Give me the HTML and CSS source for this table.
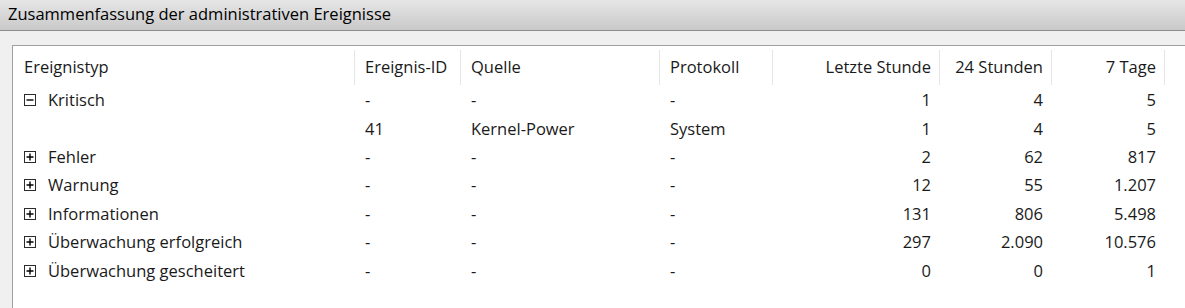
FILE: index.html
```html
<!DOCTYPE html>
<html lang="de">
<head>
    <meta charset="UTF-8">
    <meta name="viewport" content="width=device-width, initial-scale=1.0">
    <title>Zusammenfassung der administrativen Ereignisse</title>
    <link rel="stylesheet" href="styles.css">
</head>
<body>
    <div class="section-title">Zusammenfassung der administrativen Ereignisse</div>
    <div class="section-body">
        <div class="panel">
            <table class="summary">
                <colgroup>
                    <col class="c-type">
                    <col class="c-id">
                    <col class="c-source">
                    <col class="c-log">
                    <col class="c-hour">
                    <col class="c-day">
                    <col class="c-week">
                    <col>
                </colgroup>
                <thead>
                    <tr>
                        <th>Ereignistyp</th>
                        <th>Ereignis-ID</th>
                        <th>Quelle</th>
                        <th>Protokoll</th>
                        <th class="num">Letzte Stunde</th>
                        <th class="num">24 Stunden</th>
                        <th class="num">7 Tage</th>
                        <th class="filler"></th>
                    </tr>
                </thead>
                <tbody>
                    <tr>
                        <td><span class="node"><svg class="toggle" width="12" height="12" viewBox="0 0 12 12"><rect x="0.5" y="0.5" width="11" height="11" fill="#fff" stroke="#2b2b2b"/><path d="M2.5 6h7" stroke="#000" stroke-width="1.4"/></svg>Kritisch</span></td>
                        <td>-</td><td>-</td><td>-</td>
                        <td class="num">1</td><td class="num">4</td><td class="num">5</td><td></td>
                    </tr>
                    <tr>
                        <td></td>
                        <td>41</td><td>Kernel-Power</td><td>System</td>
                        <td class="num">1</td><td class="num">4</td><td class="num">5</td><td></td>
                    </tr>
                    <tr>
                        <td><span class="node"><svg class="toggle" width="12" height="12" viewBox="0 0 12 12"><rect x="0.5" y="0.5" width="11" height="11" fill="#fff" stroke="#2b2b2b"/><path d="M2.5 6h7M6 2.5v7" stroke="#000" stroke-width="1.4"/></svg>Fehler</span></td>
                        <td>-</td><td>-</td><td>-</td>
                        <td class="num">2</td><td class="num">62</td><td class="num">817</td><td></td>
                    </tr>
                    <tr>
                        <td><span class="node"><svg class="toggle" width="12" height="12" viewBox="0 0 12 12"><rect x="0.5" y="0.5" width="11" height="11" fill="#fff" stroke="#2b2b2b"/><path d="M2.5 6h7M6 2.5v7" stroke="#000" stroke-width="1.4"/></svg>Warnung</span></td>
                        <td>-</td><td>-</td><td>-</td>
                        <td class="num">12</td><td class="num">55</td><td class="num">1.207</td><td></td>
                    </tr>
                    <tr>
                        <td><span class="node"><svg class="toggle" width="12" height="12" viewBox="0 0 12 12"><rect x="0.5" y="0.5" width="11" height="11" fill="#fff" stroke="#2b2b2b"/><path d="M2.5 6h7M6 2.5v7" stroke="#000" stroke-width="1.4"/></svg>Informationen</span></td>
                        <td>-</td><td>-</td><td>-</td>
                        <td class="num">131</td><td class="num">806</td><td class="num">5.498</td><td></td>
                    </tr>
                    <tr>
                        <td><span class="node"><svg class="toggle" width="12" height="12" viewBox="0 0 12 12"><rect x="0.5" y="0.5" width="11" height="11" fill="#fff" stroke="#2b2b2b"/><path d="M2.5 6h7M6 2.5v7" stroke="#000" stroke-width="1.4"/></svg>Überwachung erfolgreich</span></td>
                        <td>-</td><td>-</td><td>-</td>
                        <td class="num">297</td><td class="num">2.090</td><td class="num">10.576</td><td></td>
                    </tr>
                    <tr>
                        <td><span class="node"><svg class="toggle" width="12" height="12" viewBox="0 0 12 12"><rect x="0.5" y="0.5" width="11" height="11" fill="#fff" stroke="#2b2b2b"/><path d="M2.5 6h7M6 2.5v7" stroke="#000" stroke-width="1.4"/></svg>Überwachung gescheitert</span></td>
                        <td>-</td><td>-</td><td>-</td>
                        <td class="num">0</td><td class="num">0</td><td class="num">1</td><td></td>
                    </tr>
                </tbody>
            </table>
        </div>
    </div>
</body>
</html>
```

FILE: styles.css
```css
body {
    margin: 0;
    padding: 0;
    font-family: "Open Sans", "Noto Sans", Arial, sans-serif;
    font-size: 16.5px;
    color: #1a1a1a;
    background: #f0f0f0;
    overflow: hidden;
}
.section-title {
    box-sizing: border-box;
    height: 31px;
    line-height: 27px;
    padding-left: 8px;
    background: linear-gradient(#e6e6e6, #c9c9c9);
    border-bottom: 1px solid #8c8c8c;
    color: #000;
}
.section-body {
    padding: 14px 0 0 12px;
}
.panel {
    box-sizing: border-box;
    height: 263px;
    background: #fff;
    border-top: 1px solid #a0a0a0;
    border-left: 1px solid #a0a0a0;
    padding-left: 1px;
}
.summary {
    border-collapse: collapse;
    table-layout: fixed;
    width: 100%;
}
.c-type { width: 341px; }
.c-id { width: 106px; }
.c-source { width: 199px; }
.c-log { width: 113px; }
.c-hour { width: 167px; }
.c-day { width: 112px; }
.c-week { width: 113px; }
.summary th {
    height: 40px;
    padding: 0 9px 0 10px;
    font-weight: normal;
    text-align: left;
    white-space: nowrap;
    background-image: linear-gradient(#e5e5e5, #e5e5e5);
    background-size: 1px 35px;
    background-position: right 0 top 4px;
    background-repeat: no-repeat;
}
.summary th.filler {
    background: none;
}
.summary td {
    height: 28.4px;
    padding: 0 9px 0 10px;
    white-space: nowrap;
    line-height: 20px;
}
.summary .num {
    text-align: right;
}
.node {
    display: flex;
    align-items: center;
    gap: 12px;
}
.toggle {
    flex: none;
}
```
